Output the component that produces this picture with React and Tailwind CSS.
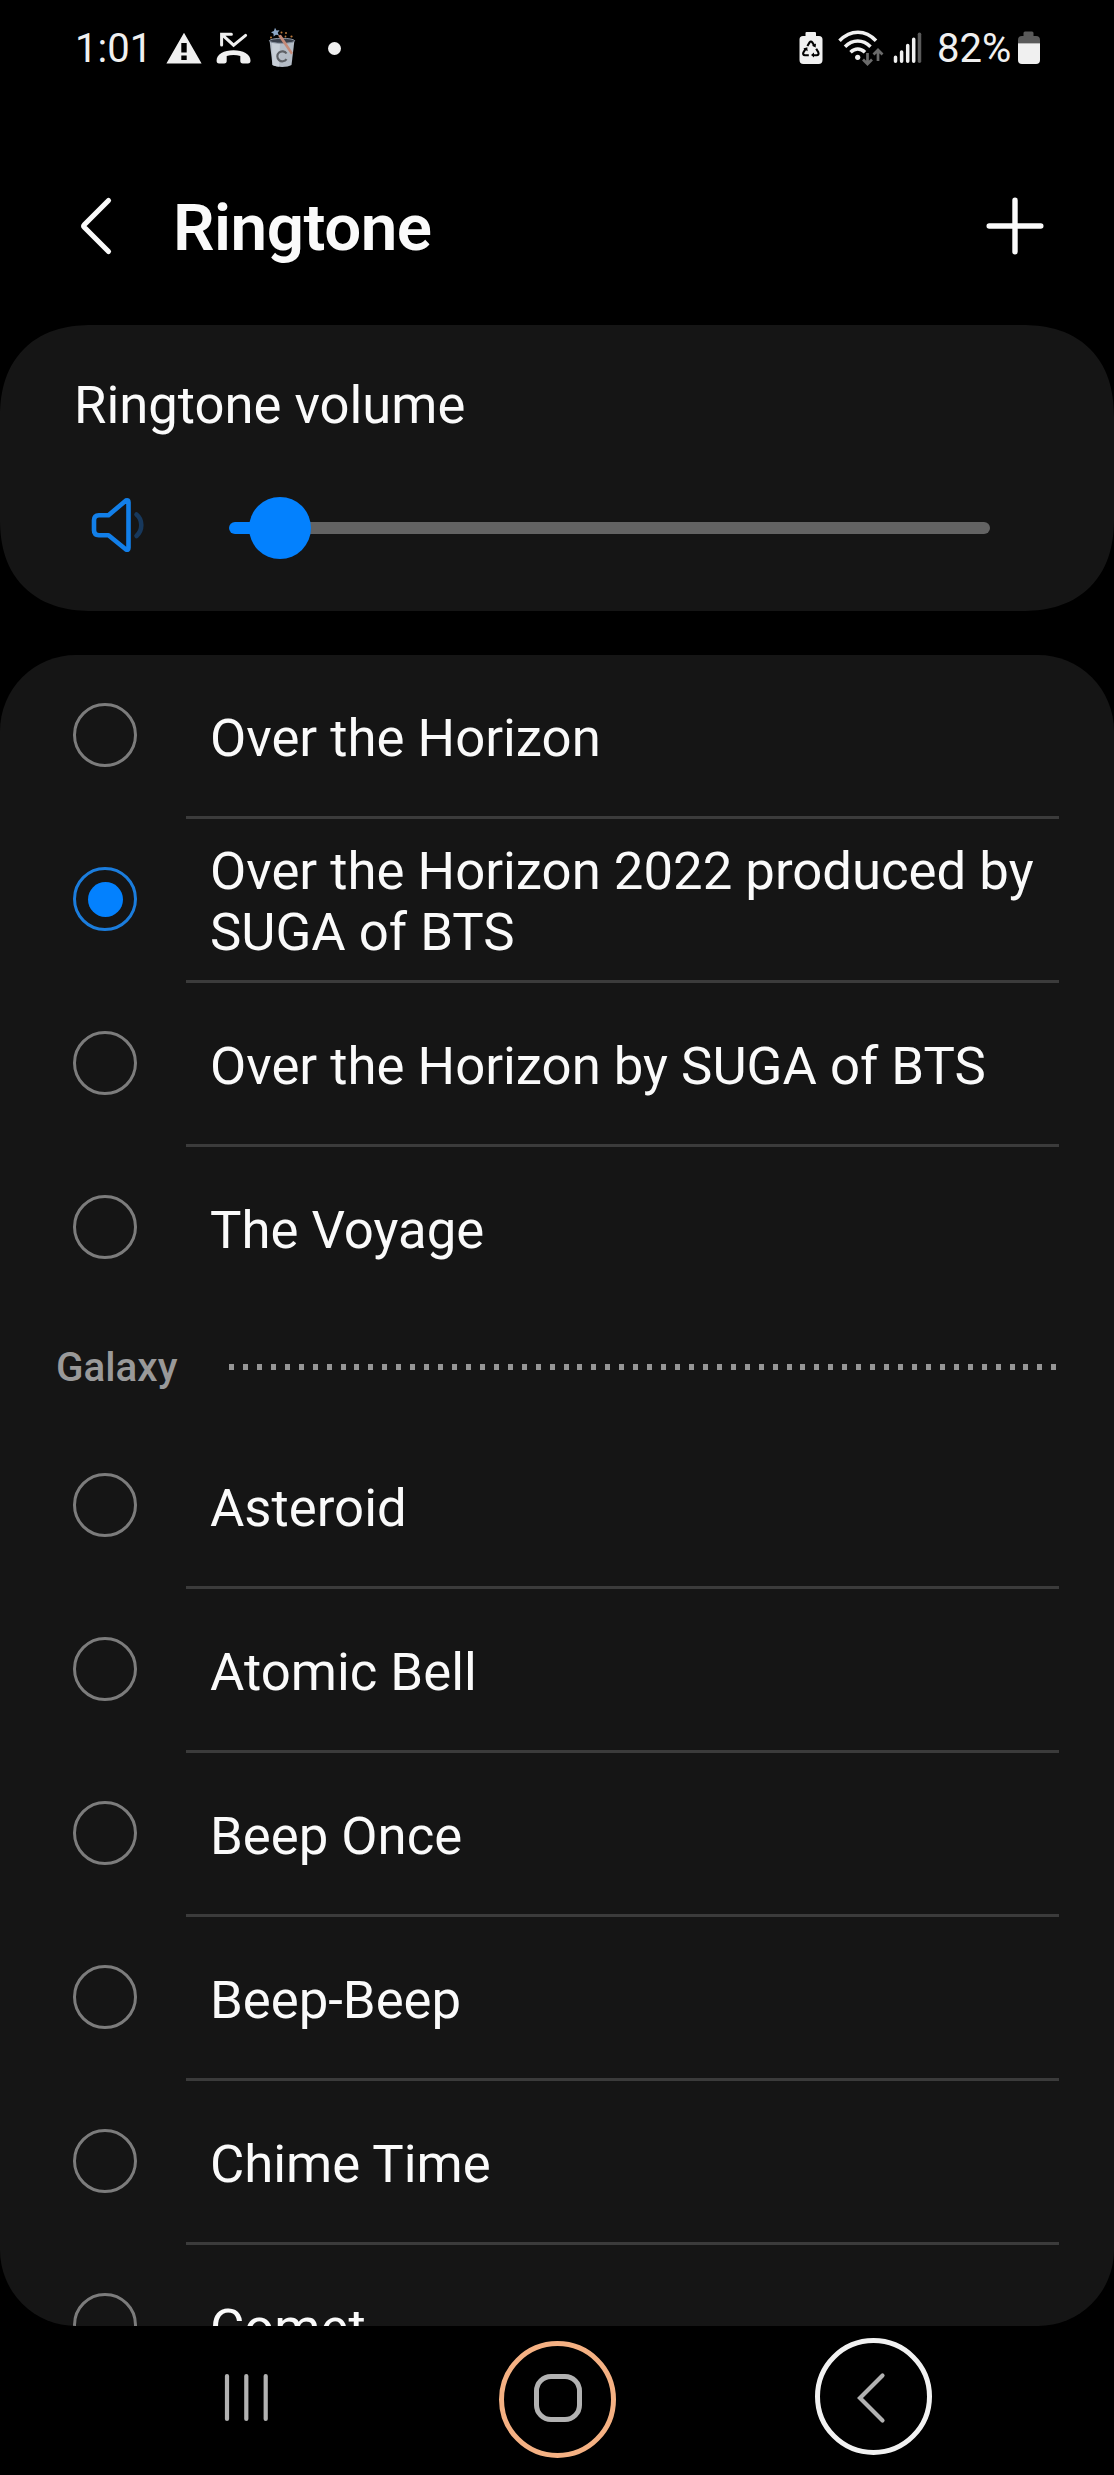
import React from "react";

const SONGS = [
  { name: "Over the Horizon" },
  { name: "Over the Horizon 2022 produced by SUGA of BTS", selected: true },
  { name: "Over the Horizon by SUGA of BTS" },
  { name: "The Voyage", last: true },
];

const GALAXY = [
  { name: "Asteroid" },
  { name: "Atomic Bell" },
  { name: "Beep Once" },
  { name: "Beep-Beep" },
  { name: "Chime Time" },
  { name: "Comet", last: true },
];

function Warning() {
  return (
    <svg className="ml-[19px] h-[32px] w-[36px]" viewBox="0 0 36 32">
      <path
        fillRule="evenodd"
        fill="#f0f0f0"
        d="M18 .8 35.6 31.6H.4ZM15.3 11v9.6h5.4V11Zm0 12.6v4.4h5.4v-4.4Z"
      />
    </svg>
  );
}

function MissedCall() {
  return (
    <svg className="ml-[14px] h-[32px] w-[35px]" viewBox="0 0 35 32" fill="none">
      <path d="M5.600 13V2.200H15.400M6 2.600 17.600 13.200 29.600 3.400" stroke="#f0f0f0" strokeWidth="3" strokeLinecap="round" />
      <path
        fill="#f0f0f0"
        d="M.6 28.500C.6 22 8 18.200 17.500 18.200S34.500 22 34.500 28.500c0 2.300-.9 3-2.600 3h-5c-1.800 0-2.600-.8-2.600-2.400V24c-4.200-1.300-9.400-1.300-13.600 0v5.100c0 1.600-.8 2.400-2.600 2.400h-5c-1.700 0-2.500-.7-2.500-3Z"
      />
    </svg>
  );
}

function Cup() {
  return (
    <svg className="ml-[16px] h-[42px] w-[30px]" viewBox="0 0 30 42">
      <path d="M2.500 13h25l-3 25c-4 2.600-14.500 2.600-19 0Z" fill="#b4bcc6" />
      <path d="M5 15h8l-1 24.500c-3-.2-5.200-.8-6.500-1.500Z" fill="#c8cfd7" />
      <ellipse cx="15" cy="13.800" rx="12.600" ry="2.500" fill="#3a404b" stroke="#8992a0" strokeWidth="1" />
      <path d="m11 8.500 3-.8L26 26l-2 1.500Z" fill="#c58a78" />
      <path d="m8 .8 1.500 2.600 3-.2-1.800 2.500 1.200 2.600-3-.5L6.700 9.600 6.500 6.800 4 5.200l2.900-1.200Z" fill="#8ba6c6" />
      <g fill="#b9783c">
        <circle cx="14.500" cy="5.500" r="1" />
        <circle cx="19" cy="6" r="1" />
        <circle cx="24.500" cy="9.500" r="1.100" />
        <circle cx="4" cy="10.500" r="1" />
        <circle cx="18.500" cy="9.500" r=".9" />
      </g>
      <path d="M19.500 26.500a5 5 0 1 0 0 5.600" fill="none" stroke="#5d6065" strokeWidth="2.200" />
    </svg>
  );
}

function RecycleBattery() {
  return (
    <svg className="h-[34px] w-[24px]" viewBox="0 0 24 34">
      <path d="M7.500 1h8.500q1 0 1 1v3h3q3.500 0 3.500 3.500V29q0 4-4 4h-15q-4 0-4-4V8.500Q.5 5 4 5h2.500V2q0-1 1-1Z" fill="#f0f0f0" />
      <g fill="none" stroke="#000" strokeWidth="2.100">
        <path d="m8.400 15 2.200-3.600q1.300-1.900 2.700 0l2.100 3.400" />
        <path d="m17.200 17.800 2.100 3.500q1 2.700-1.700 2.900h-3.400" />
        <path d="M9.800 24.200H6q-2.600-.3-1.600-2.700l2.200-3.600" />
      </g>
      <path d="m17 12.600-.4 4-3.600-1.800ZM15 21.600v5l-3-2.500ZM4.300 17.600l4-1.300.3 4Z" fill="#000" />
    </svg>
  );
}

function Wifi() {
  return (
    <svg className="ml-[15px] h-[36px] w-[46px]" viewBox="0 0 46 36" fill="none">
      <g stroke="#f0f0f0" strokeWidth="3.500">
        <path d="M1.500 10.800C12.500-.6 27.500-.6 38 10.800" />
        <path d="M7 16.800c7.500-7.600 18-7.600 25.500 0" />
        <path d="M12.500 22.300c4.500-4.300 10-4.300 14.500 0" />
      </g>
      <circle cx="19.700" cy="27.300" r="2.600" fill="#f0f0f0" />
      <g stroke="#6b6b6b" strokeWidth="2.700">
        <path d="M29.500 23v11M25 29.500l4.500 4.500 4.500-4.500M40 31V20M35.500 24.500 40 20l4.500 4.500" />
      </g>
    </svg>
  );
}

function Signal() {
  return (
    <svg className="ml-[9px] h-[34px] w-[30px]" viewBox="0 0 30 34" strokeLinecap="round" strokeWidth="3.500">
      <path d="M2.500 26.300v4M8.600 21v9.300M14.700 14.500v15.800M20.700 8.300v22" stroke="#f0f0f0" />
      <path d="M26.500 3.300v27" stroke="#5a5a5a" />
    </svg>
  );
}

function Battery() {
  return (
    <svg className="ml-[7px] h-[34px] w-[24px]" viewBox="0 0 24 34">
      <path d="M8 .5h7q1.500 0 1.500 1.500v3H19q4 0 4 4v3.200H1V9q0-4 4-4h1.500V2Q6.500.5 8 .5Z" fill="#5a5a5a" />
      <path d="M1 12.200h22V29q0 4-4 4H5q-4 0-4-4Z" fill="#f0f0f0" />
    </svg>
  );
}

function StatusBar() {
  return (
    <div className="flex h-[96px] items-center pl-[75px] pr-[73px] text-[40px] leading-none text-[#f0f0f0]">
      <span className="w-[72px] whitespace-nowrap pt-[2px]">1:01</span>
      <Warning />
      <MissedCall />
      <Cup />
      <div className="ml-[31px] size-[13px] rounded-full bg-[#f0f0f0]" />
      <div className="ml-auto flex items-center">
        <RecycleBattery />
        <Wifi />
        <Signal />
        <span className="ml-[14px] w-[73px] whitespace-nowrap pt-[2px]">82%</span>
        <Battery />
      </div>
    </div>
  );
}

function Header() {
  return (
    <header className="flex h-[229px] items-center pl-[78px] pr-[68px] pt-[31px]">
      <svg className="h-[62px] w-[36px]" viewBox="0 0 36 62" fill="none">
        <path d="M30.500 5.500 6.500 29.500q-1.500 1.500 0 3L30.500 56.500" stroke="#fafafa" strokeWidth="5.200" strokeLinecap="round" />
      </svg>
      <h1 className="ml-[59px] pt-[4px] text-[65.500px] font-semibold leading-none tracking-[-0.5px] text-[#fafafa]">Ringtone</h1>
      <svg className="ml-auto h-[62px] w-[62px]" viewBox="0 0 62 62" fill="none">
        <path d="M31 5.200v51.600M5.200 31h51.600" stroke="#fafafa" strokeWidth="5.400" strokeLinecap="round" />
      </svg>
    </header>
  );
}

function VolumeCard() {
  return (
    <section className="h-[286px] rounded-[92px] bg-[#151515] pl-[73px] pr-[124px] pt-[50px] [corner-shape:superellipse(1.2)]">
      <h2 className="pl-px text-[52.600px] leading-[61px] text-[#fafafa]">Ringtone volume</h2>
      <div className="mt-[61px] flex h-[62px] items-center">
        <svg className="mb-[5px] ml-[16px] h-[62px] w-[60px]" viewBox="0 0 60 62" fill="none">
          <path
            d="M10 20.200h9.500L37 5.500q2.500-1 2.500 1.800v45.400q0 2.800-2.500 1.800L19.500 40.200H10q-5-.3-5-5v-10q0-4.700 5-5Z"
            stroke="#127fe9"
            strokeWidth="4.600"
            strokeLinejoin="round"
          />
          <path d="M47.500 19.500q4.800 4 4.800 10.500t-4.800 11" stroke="#17385c" strokeWidth="4.600" strokeLinecap="round" />
        </svg>
        <div className="ml-[80px] flex flex-1 items-center">
          <div className="h-[12px] w-[24px] rounded-l-full bg-[#0381fe]" />
          <div className="z-10 -ml-[4px] size-[62px] rounded-full bg-[#0381fe]" />
          <div className="-ml-[4px] h-[12px] flex-1 rounded-r-full bg-[#636363]" />
        </div>
      </div>
    </section>
  );
}

function Radio({ selected }) {
  return selected ? (
    <span className="flex size-[64px] shrink-0 items-center justify-center rounded-full border-[3px] border-[#1b7ddd]">
      <span className="size-[35px] rounded-full bg-[#0381fe]" />
    </span>
  ) : (
    <span className="size-[64px] shrink-0 rounded-full border-[3px] border-[#7c7c7c]" />
  );
}

function Row({ name, selected, last }) {
  return (
    <li className="flex h-[164px] shrink-0 pl-[73px] pr-[55px]">
      <div className="flex h-[160px] items-center">
        <Radio selected={selected} />
      </div>
      <div
        className={
          "ml-[49px] flex flex-1 items-center border-b-[3px] pl-[24px] pt-[5px] " +
          (last ? "border-transparent" : "border-[#3b3b3b]")
        }
      >
        <span className="text-[52.700px] leading-[61px] text-[#fafafa]">{name}</span>
      </div>
    </li>
  );
}

function SectionLabel({ children }) {
  return (
    <div className="flex h-[114px] shrink-0 items-center pl-[56px] pr-[55px]">
      <span className="w-[173px] pt-px text-[40.400px] font-medium leading-none text-[#999999]">{children}</span>
      <div className="flex flex-1 justify-between pr-[2px]">
        {Array.from({ length: 60 }, (_, i) => (
          <span key={i} className="mb-[3px] h-[6px] w-[5px] bg-[#969696]" />
        ))}
      </div>
    </div>
  );
}

function NavBar() {
  return (
    <nav className="flex h-[149px] items-start pl-[222px]">
      <svg className="mt-[46px] h-[52px] w-[49px]" viewBox="0 0 49 52">
        <path d="M5 4v43M24.300 4v43M43.700 4v43" stroke="#b2b2b2" strokeWidth="4.200" strokeLinecap="round" />
      </svg>
      <div className="ml-[228px] mt-[15px] flex size-[117px] items-center justify-center rounded-full border-[5px] border-[#f5b183]">
        <span className="mb-[3px] size-[48px] rounded-[17px] border-[5px] border-[#b2b2b2]" />
      </div>
      <div className="ml-[199px] mt-[12px] flex size-[117px] items-center justify-center rounded-full border-[5px] border-[#f2f2f2]">
        <svg className="mr-[5px] mt-[2px] h-[54px] w-[32px]" viewBox="0 0 32 54" fill="none">
          <path d="M27.500 4.500 5 27l22.500 22.500" stroke="#b2b2b2" strokeWidth="4.200" strokeLinecap="round" />
        </svg>
      </div>
    </nav>
  );
}

export default function App() {
  return (
    <div className="flex h-[2475px] w-[1114px] flex-col overflow-hidden bg-black font-['Roboto',sans-serif]">
      <StatusBar />
      <Header />
      <VolumeCard />
      <main className="mt-[44px] h-[1671px] shrink-0 overflow-hidden rounded-[76px] bg-[#151515]">
        <ul>
          {SONGS.map((s) => (
            <Row key={s.name} {...s} />
          ))}
        </ul>
        <SectionLabel>Galaxy</SectionLabel>
        <ul>
          {GALAXY.map((s) => (
            <Row key={s.name} {...s} />
          ))}
        </ul>
      </main>
      <NavBar />
    </div>
  );
}
